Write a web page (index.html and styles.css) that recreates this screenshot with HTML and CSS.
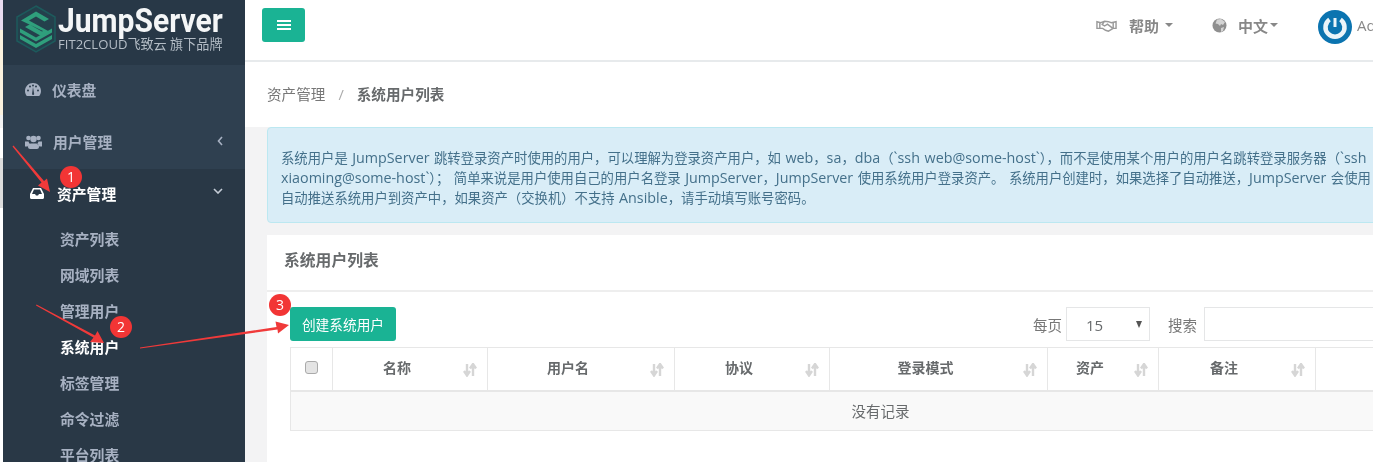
FILE: index.html
```html
<!DOCTYPE html>
<html lang="zh-CN">
<head>
<meta charset="utf-8">
<title>系统用户列表</title>
<link rel="stylesheet" href="styles.css">
</head>
<body>
<div class="page">
  <div class="strip"></div>
  <aside class="sidebar">
    <div class="brand">
      <svg class="brand-mark" viewBox="0 0 44 50" width="44" height="50">
        <path d="M22 2 41 13V37L22 48 3 37V13Z" fill="#24404c" stroke="#1d5a5c" stroke-width="1.5"/>
        <path d="M6 31 22 40 38 31V35L22 44 6 35Z" fill="#2f9f7c"/>
        <path d="M6 24.500 22 33.500 38 24.500V28.500L22 37.500 6 28.500Z" fill="#2f9f7c"/>
        <path d="M7 16.500 22 7.500 35 15 30.500 17.500 22 12.500 15 16.500 36 28 28 32.500 11 23 15.500 20.500 28 27.500 29 27Z" fill="#2f9f7c"/>
      </svg>
      <div class="brand-text">
        <div class="brand-name">JumpServer</div>
        <div class="brand-sub">FIT2CLOUD飞致云 旗下品牌</div>
      </div>
    </div>
    <nav class="nav">
      <a class="nav-item">
        <svg class="nav-icon" viewBox="0 0 16 13" width="16" height="13"><path fill-rule="evenodd" d="M8 0C3.600 0 0 3.500 0 8c0 2 .7 3.700 1.800 5h12.400C15.300 11.700 16 10 16 8c0-4.500-3.600-8-8-8ZM3 8.500a1 1 0 1 1 0-2 1 1 0 0 1 0 2Zm2-4a1 1 0 1 1 0-2 1 1 0 0 1 0 2Zm3-1a1 1 0 1 1 0-2 1 1 0 0 1 0 2Zm3 1a1 1 0 1 1 0-2 1 1 0 0 1 0 2Zm2 4a1 1 0 1 1 0-2 1 1 0 0 1 0 2ZM7 11l1-7 1.200 7a1.100 1.100 0 1 1-2.200 0Z" fill="#a7b1c2"/></svg>
        <span>仪表盘</span>
      </a>
      <a class="nav-item">
        <svg class="nav-icon" viewBox="0 0 17 14" width="17" height="14"><g fill="#a7b1c2"><circle cx="3.500" cy="3" r="2.300"/><circle cx="13.500" cy="3" r="2.300"/><circle cx="8.500" cy="4" r="3.200"/><path d="M0 6.500h3.500c.3 1.200.8 2 1.500 2.500-1.200.5-2 1.500-2.300 2.500H0ZM17 6.500h-3.500c-.3 1.200-.8 2-1.500 2.500 1.200.5 2 1.500 2.300 2.500H17ZM6 8.500h5c2 0 3 1.500 3 3.300 0 1.400-1 2.200-2 2.200H5c-1 0-2-.8-2-2.200 0-1.800 1-3.300 3-3.300Z"/></g></svg>
        <span>用户管理</span>
        <svg class="chev chev-left" viewBox="0 0 6 10" width="6" height="10"><path d="M5 1 1.500 5 5 9" fill="none" stroke="#a7b1c2" stroke-width="1.600"/></svg>
      </a>
      <div class="nav-group">
        <a class="nav-item nav-active">
          <svg class="nav-icon" viewBox="0 0 14 11" width="14" height="11"><path fill-rule="evenodd" d="M3 0h8l3 6v3.500c0 .9-.6 1.500-1.500 1.500h-11C.6 11 0 10.400 0 9.500V6Zm1 1.500L2 6h3l1 1.500h2L9 6h3L10 1.500Z" fill="#fff"/></svg>
          <span>资产管理</span>
          <svg class="chev chev-down" viewBox="0 0 10 6" width="10" height="6"><path d="M1 1 5 5 9 1" fill="none" stroke="#c4ccd6" stroke-width="1.600"/></svg>
        </a>
        <a class="sub-item">资产列表</a>
        <a class="sub-item">网域列表</a>
        <a class="sub-item">管理用户</a>
        <a class="sub-item sub-active">系统用户</a>
        <a class="sub-item">标签管理</a>
        <a class="sub-item">命令过滤</a>
        <a class="sub-item">平台列表</a>
      </div>
    </nav>
  </aside>
  <main class="main">
    <header class="topbar">
      <button class="toggle" type="button" aria-label="menu">
        <svg viewBox="0 0 14 12" width="14" height="12"><path d="M0 1h14v2H0zM0 5h14v2H0zM0 9h14v2H0z" fill="#fff"/></svg>
      </button>
      <div class="top-right">
        <svg class="top-hand" viewBox="0 0 22 13" width="21" height="13"><path d="M1 2.500 5 3.500 9 2 13 2.500 16 3.500 21 2.500V9.500H18L13 12.500 10 11.500 7 9.500H1ZM9 2 6.500 5.500 9 7 12 5 17 9M4 3.500V9M18 3.500V9" fill="none" stroke="#999" stroke-width="1.500"/></svg>
        <span class="top-label top-help">帮助</span>
        <i class="caret caret-help"></i>
        <svg class="top-globe" viewBox="0 0 15 15" width="15" height="15"><circle cx="7.500" cy="7.500" r="7" fill="#8f8f8f"/><path d="M5 1.500 9 1 13 4 11 7 9 6 8 8 6 6 3.500 5.500ZM9 10l3-1-1 4-2 1Z" fill="#d4d4d4"/></svg>
        <span class="top-label top-lang">中文</span>
        <i class="caret caret-lang"></i>
        <svg class="avatar" viewBox="0 0 34 34" width="34" height="34"><circle cx="17" cy="17" r="17" fill="#0b74b0"/><path d="M11.500 9.500A9.500 9.500 0 1 0 22.500 9.500" fill="none" stroke="#eaf4f9" stroke-width="4.500"/><path d="M17 8v9" stroke="#eaf4f9" stroke-width="3"/></svg>
        <span class="user-name">Admin</span>
      </div>
    </header>
    <div class="crumbs">
      <span>资产管理</span><span class="crumb-sep">/</span><strong>系统用户列表</strong>
    </div>
    <div class="content">
      <div class="alert">
        系统用户是 <span class="lt">JumpServer</span> 跳转登录资产时使用的用户，可以理解为登录资产用户，如 <span class="lt">web</span>，<span class="lt">sa</span>，<span class="lt">dba</span>（<span class="lt">`ssh web@some-host`</span>），而不是使用某个用户的用户名跳转登录服务器（<span class="lt">`ssh</span><br>
        <span class="lt">xiaoming@some-host`</span>）； 简单来说是用户使用自己的用户名登录 <span class="lt">JumpServer</span>，<span class="lt">JumpServer</span> 使用系统用户登录资产。 系统用户创建时，如果选择了自动推送，<span class="lt">JumpServer</span> 会使用<br>
        自动推送系统用户到资产中，如果资产（交换机）不支持 <span class="lt">Ansible</span>，请手动填写账号密码。
      </div>
      <section class="card">
        <h5 class="card-title">系统用户列表</h5>
        <div class="card-body">
          <div class="toolbar">
            <button class="btn-create" type="button">创建系统用户</button>
            <div class="filters">
              <span class="filter-label">每页</span>
              <div class="select"><span class="select-value">15</span><i class="select-caret"></i></div>
              <span class="filter-label filter-search">搜索</span>
              <input class="search" type="text">
            </div>
          </div>
          <table class="grid">
            <colgroup>
              <col class="c-check"><col class="c-name"><col class="c-user"><col class="c-proto"><col class="c-mode"><col class="c-asset"><col class="c-note"><col class="c-rest">
            </colgroup>
            <thead>
              <tr>
                <th><i class="check"></i></th>
                <th><div class="th-in"><span>名称</span><svg class="sort" viewBox="0 0 14 14" width="14" height="14"><path d="M4 1v9M1 8l3 4.500L7 8M10 13V3M7 5.500 10 1l3 4.500" fill="none" stroke="#d6d6d6" stroke-width="2.400"/></svg></div></th>
                <th><div class="th-in"><span>用户名</span><svg class="sort" viewBox="0 0 14 14" width="14" height="14"><path d="M4 1v9M1 8l3 4.500L7 8M10 13V3M7 5.500 10 1l3 4.500" fill="none" stroke="#d6d6d6" stroke-width="2.400"/></svg></div></th>
                <th><div class="th-in"><span>协议</span><svg class="sort" viewBox="0 0 14 14" width="14" height="14"><path d="M4 1v9M1 8l3 4.500L7 8M10 13V3M7 5.500 10 1l3 4.500" fill="none" stroke="#d6d6d6" stroke-width="2.400"/></svg></div></th>
                <th><div class="th-in"><span>登录模式</span><svg class="sort" viewBox="0 0 14 14" width="14" height="14"><path d="M4 1v9M1 8l3 4.500L7 8M10 13V3M7 5.500 10 1l3 4.500" fill="none" stroke="#d6d6d6" stroke-width="2.400"/></svg></div></th>
                <th><div class="th-in"><span>资产</span><svg class="sort" viewBox="0 0 14 14" width="14" height="14"><path d="M4 1v9M1 8l3 4.500L7 8M10 13V3M7 5.500 10 1l3 4.500" fill="none" stroke="#d6d6d6" stroke-width="2.400"/></svg></div></th>
                <th><div class="th-in"><span>备注</span><svg class="sort" viewBox="0 0 14 14" width="14" height="14"><path d="M4 1v9M1 8l3 4.500L7 8M10 13V3M7 5.500 10 1l3 4.500" fill="none" stroke="#d6d6d6" stroke-width="2.400"/></svg></div></th>
                <th></th>
              </tr>
            </thead>
            <tbody>
              <tr><td class="empty" colspan="8"><span class="empty-text">没有记录</span></td></tr>
            </tbody>
          </table>
        </div>
      </section>
    </div>
  </main>
  <svg class="marks" viewBox="0 0 1373 462" width="1373" height="462">
    <path d="M12.500 146.500 13.500 145.500 44 181 47 178.500 50 192 38 185.500 41.500 182.500Z" fill="#f03a3a"/>
    <path d="M36 305.500 36.500 304.500 95 335.500 97.500 331 104 343 90 342 93.500 337.500Z" fill="#f03a3a"/>
    <path d="M140 347.500 276.500 327 275.500 321.500 289 325 278 333.500 277.500 329.500 140 348.500Z" fill="#f03a3a"/>
  </svg>
  <span class="badge badge-1">1</span>
  <span class="badge badge-2">2</span>
  <span class="badge badge-3">3</span>
</div>
</body>
</html>
```
FILE: styles.css
```css
* { box-sizing: border-box; }
html, body { margin: 0; padding: 0; height: 100%; overflow: hidden; }
body { background: #fff; font-family: "Open Sans", "Noto Sans CJK SC", sans-serif; color: #676a6c; }
.page { position: relative; display: flex; width: 1373px; height: 462px; overflow: hidden; filter: blur(0.35px); }

.strip { width: 3px; flex: none; background: linear-gradient(#e8dcf0 0, #e8dcf0 30px, #fbf2df 30px, #fbf2df 115px, #f3f3f3 115px, #f3f3f3 128px, #fff 128px, #fff 158px, #ddd 158px, #ddd 208px, #fff 208px); }

.sidebar { width: 242px; flex: none; background: #293846; display: flex; flex-direction: column; }
.brand { height: 65px; flex: none; display: flex; align-items: flex-start; padding: 4px 0 0 11px; background: #283847; }
.brand-mark { flex: none; }
.brand-name { font-family: "Roboto", sans-serif; font-weight: 700; font-size: 33px; line-height: 34px; color: #f4f6f7; transform: scaleX(0.91); transform-origin: left top; white-space: nowrap; }
.brand-sub { font-size: 13.100px; line-height: 12px; color: #b4bdc6; white-space: nowrap; }

.nav { display: flex; flex-direction: column; flex: none; }
.nav-item { height: 52px; flex: none; display: flex; align-items: center; padding: 0 0 3px 22px; background: #2f4050; color: #a7b1c2; font-size: 14.800px; font-weight: 700; position: relative; }
.nav-icon { flex: none; margin-right: 11px; }
.chev { position: absolute; }
.chev-left { right: 22px; top: 19px; }
.chev-down { right: 22px; top: 19px; }
.nav-group { background: #293846; }
.nav-active { background: #293846; color: #fff; padding-left: 27px; }
.nav-active .nav-icon { margin-right: 13px; }
.sub-item { display: block; height: 36px; line-height: 36px; padding-left: 57px; color: #a7b1c2; font-size: 14.800px; font-weight: 700; }
.sub-active { color: #fff; }

.main { flex: 1; min-width: 0; overflow: hidden; background: #f3f3f4; }
.topbar { height: 62px; display: flex; align-items: flex-start; background: #fff; border-bottom: 2px solid #e7eaec; padding: 8px 0 0 17px; white-space: nowrap; }
.toggle { width: 43px; height: 34px; flex: none; border: 0; border-radius: 3px; background: #1ab394; display: flex; align-items: center; justify-content: center; padding: 0; }
.top-right { margin-left: auto; display: flex; align-items: center; height: 34px; color: #888; width: 277px; flex: none; }
.top-right > * { flex: none; }
.top-label { font-size: 15px; font-weight: 700; color: #888; }
.top-help { margin-left: 12px; }
.caret { display: inline-block; width: 0; height: 0; border-left: 4.500px solid transparent; border-right: 4.500px solid transparent; border-top: 4.500px solid #888; }
.caret-help { margin-left: 6px; }
.caret-lang { margin-left: 2px; }
.top-globe { margin-left: 39px; }
.top-lang { margin-left: 11px; }
.avatar { margin-left: 40px; margin-top: 4px; }
.user-name { margin-left: 5px; font-size: 15px; color: #888; }

.crumbs { height: 65px; background: #fff; display: flex; align-items: center; padding: 0 0 2px 22px; font-size: 14.600px; color: #777; }
.crumbs strong { font-weight: 700; color: #676a6c; }
.crumb-sep { margin: 0 13px; color: #aaa; }

.content { padding: 0 0 0 22px; width: 1240px; }
.alert { height: 96px; padding: 20px 14px 0 13px; background: #d9edf7; border: 1px solid #bce8f1; border-radius: 4px; color: #44708a; font-size: 13.350px; line-height: 20px; word-spacing: 1px; white-space: nowrap; overflow: hidden; }
.lt { font-size: 14.300px; }
.card { margin-top: 12px; background: #fff; height: 300px; }
.card-title { margin: 0; height: 57px; line-height: 51px; padding-left: 17px; font-size: 15.800px; font-weight: 700; color: #676a6c; border-bottom: 2px solid #eee; }
.card-body { padding: 15px 0 0 23px; }
.toolbar { display: flex; align-items: flex-start; height: 40px; }
.btn-create { width: 106px; height: 34px; flex: none; border: 0; border-radius: 3px; background: #1ab394; color: #fff; font: 400 13.700px "Open Sans", "Noto Sans CJK SC", sans-serif; padding: 0; }
.filters { display: flex; align-items: center; height: 34px; margin-left: 637px; flex: none; }
.filter-label { font-size: 14.500px; color: #777; width: 33px; }
.filter-search { margin-left: 18px; width: 36px; }
.select { width: 84px; height: 34px; border: 1px solid #e5e6e7; position: relative; }
.select-value { position: absolute; left: 19px; top: 7px; font-size: 15px; line-height: 20px; color: #676a6c; }
.select-caret { position: absolute; right: 7px; top: 13px; width: 0; height: 0; border-left: 3.500px solid transparent; border-right: 3.500px solid transparent; border-top: 7px solid #555; }
.search { width: 220px; height: 34px; border: 1px solid #e5e6e7; background: #fff; padding: 0; }

.grid { border-collapse: collapse; table-layout: fixed; width: 1100px; }
.c-check { width: 42px; } .c-name { width: 155px; } .c-user { width: 187px; } .c-proto { width: 155px; } .c-mode { width: 218px; } .c-asset { width: 111px; } .c-note { width: 157px; } .c-rest { width: 75px; }
.grid th { height: 43px; border: 1px solid #e7e7e7; border-bottom: 2px solid #e7e7e7; padding: 0 10px 0 0; font-size: 14px; font-weight: 700; color: #676a6c; text-align: center; }
.th-in { display: flex; align-items: center; }
.th-in span { flex: 1; text-align: center; margin: -3px 2px 0 0; }
.sort { flex: none; margin-top: 2px; }
.check { display: block; width: 13px; height: 13px; margin: -2px 0 0 14px; border: 1px solid #aaa; border-radius: 3px; background: #e4e4e4; }
.empty { height: 40px; background: #f9f9f9; border: 1px solid #e7e7e7; text-align: center; font-size: 14.500px; color: #676a6c; }
.empty-text { display: inline-block; margin-left: 80px; }

.marks { position: absolute; left: 0; top: 0; pointer-events: none; }
.badge { position: absolute; width: 22px; height: 22px; line-height: 22px; border-radius: 50%; background: #f23535; color: #fff; font-size: 14px; text-align: center; }
.badge-1 { left: 60px; top: 166px; }
.badge-2 { left: 110px; top: 316px; }
.badge-3 { left: 269px; top: 294px; }
```
